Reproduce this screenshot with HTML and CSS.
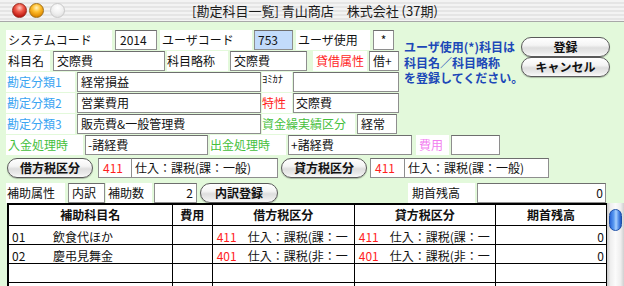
FILE: index.html
```html
<!DOCTYPE html>
<html lang="ja">
<head>
  <meta charset="UTF-8">
  <title>勘定科目一覧</title>
  <link rel="stylesheet" href="styles.css">
</head>
<body>

  <div class="window">

    <!-- Title Bar -->
    <div class="titlebar">
      <div class="lights">
        <span class="light red"></span>
        <span class="light yellow"></span>
        <span class="light off"></span>
      </div>
      <div class="title">[勘定科目一覧] 青山商店　株式会社 (37期)</div>
    </div>

    <div class="content">

      <!-- Top fields + actions -->
      <div class="top">
        <div class="fields">
          <div class="row">
            <div class="lbl sys-lbl">システムコード</div>
            <div class="box sys-box">2014</div>
            <div class="lbl user-lbl">ユーザコード</div>
            <div class="box user-box">753</div>
            <div class="lbl use-lbl">ユーザ使用</div>
            <div class="box use-box">*</div>
          </div>
          <div class="row">
            <div class="lbl name-lbl">科目名</div>
            <div class="box name-box">交際費</div>
            <div class="lbl short-lbl">科目略称</div>
            <div class="box short-box">交際費</div>
            <div class="lbl dc-lbl red">貸借属性</div>
            <div class="box dc-box">借+</div>
          </div>
          <div class="row">
            <div class="lbl cat-lbl blue">勘定分類1</div>
            <div class="box cat-box">経常損益</div>
            <div class="lbl kana-lbl">ﾖﾐｶﾅ</div>
            <div class="box side-box"></div>
          </div>
          <div class="row">
            <div class="lbl cat-lbl blue">勘定分類2</div>
            <div class="box cat-box">営業費用</div>
            <div class="lbl mid-lbl red">特性</div>
            <div class="box side-box">交際費</div>
          </div>
          <div class="row">
            <div class="lbl cat-lbl blue">勘定分類3</div>
            <div class="box cat-box">販売費&amp;一般管理費</div>
            <div class="lbl fund-lbl green">資金繰実績区分</div>
            <div class="box fund-box">経常</div>
          </div>
        </div>

        <div class="note">ユーザ使用(*)科目は<br>科目名／科目略称<br>を登録してください。</div>

        <div class="actions">
          <button class="aqua">登録</button>
          <button class="aqua">キャンセル</button>
        </div>
      </div>

      <div class="row">
        <div class="lbl in-lbl green">入金処理時</div>
        <div class="box in-box">-諸経費</div>
        <div class="lbl out-lbl green">出金処理時</div>
        <div class="box out-box">+諸経費</div>
        <div class="lbl cost-lbl pink">費用</div>
        <div class="box cost-box"></div>
      </div>

      <div class="row tax-row">
        <button class="aqua tax-btn">借方税区分</button>
        <div class="box code-box debit-code red">411</div>
        <div class="box tax-box">仕入：課税(課：一般)</div>
        <button class="aqua tax-btn credit-btn">貸方税区分</button>
        <div class="box code-box red">411</div>
        <div class="box tax-box credit-box">仕入：課税(課：一般)</div>
      </div>

      <div class="row sub-row">
        <div class="lbl sub-lbl">補助属性</div>
        <div class="box kind-box">内訳</div>
        <div class="lbl count-lbl">補助数</div>
        <div class="box count-box num">2</div>
        <button class="aqua detail-btn">内訳登録</button>
        <div class="lbl open-lbl">期首残高</div>
        <div class="box open-box num">0</div>
      </div>

      <!-- Sub account list -->
      <div class="list">
        <table class="grid">
          <colgroup>
            <col class="c-name"><col class="c-cost"><col class="c-tax"><col class="c-tax2"><col class="c-open">
          </colgroup>
          <thead>
            <tr><th>補助科目名</th><th>費用</th><th>借方税区分</th><th>貸方税区分</th><th>期首残高</th></tr>
          </thead>
          <tbody>
            <tr>
              <td><span class="code">01</span>飲食代ほか</td>
              <td></td>
              <td><span class="tcode">411</span>仕入：課税(課：一</td>
              <td><span class="tcode">411</span>仕入：課税(課：一</td>
              <td class="num">0</td>
            </tr>
            <tr>
              <td><span class="code">02</span>慶弔見舞金</td>
              <td></td>
              <td><span class="tcode">401</span>仕入：課税(非：一</td>
              <td><span class="tcode">401</span>仕入：課税(非：一</td>
              <td class="num">0</td>
            </tr>
            <tr><td></td><td></td><td></td><td></td><td></td></tr>
            <tr><td></td><td></td><td></td><td></td><td></td></tr>
          </tbody>
        </table>
        <div class="scrollbar"><div class="thumb"></div></div>
      </div>

    </div>
  </div>

</body>
</html>
```

FILE: styles.css
```css
/* Global */
body {
  margin: 0;
  font-family: "Noto Sans CJK JP", "Noto Sans", sans-serif;
  font-size: 12px;
  color: #111;
  background-color: #e3f9db;
}

.window {
  width: 624px;
  height: 286px;
  overflow: hidden;
  background-color: #e3f9db;
}

/* Title Bar */
.titlebar {
  height: 21px;
  display: flex;
  align-items: center;
  border-bottom: 1px solid #a8a8a8;
  background: repeating-linear-gradient(to bottom, #f3f3f3 0, #f3f3f3 2px, #e5e5e5 2px, #e5e5e5 4px);
}

.lights {
  display: flex;
  gap: 2px;
  padding-left: 12px;
  width: 56px;
}

.light {
  width: 15px;
  height: 15px;
  border-radius: 50%;
  box-sizing: border-box;
}

.light.red {
  background: radial-gradient(circle at 50% 30%, #ffd0c8 0, #f05a4a 35%, #c01a12 75%, #8a0a08 100%);
  border: 1px solid #9a2a20;
}

.light.yellow {
  background: radial-gradient(circle at 50% 30%, #fff2c0 0, #ffc030 35%, #e08a00 75%, #9a5a00 100%);
  border: 1px solid #a0701a;
}

.light.off {
  margin-left: 4px;
  background: radial-gradient(circle at 50% 30%, #ffffff 0, #f0f0f0 50%, #d8d8d8 100%);
  border: 1px solid #c8c8c8;
}

.title {
  margin-left: 124px;
  font-size: 13px;
  color: #1a1a1a;
  white-space: nowrap;
}

/* Content */
.content {
  padding-top: 8px;
}

.top {
  display: flex;
}

.fields {
  width: 400px;
  flex-shrink: 0;
}

.row {
  display: flex;
  align-items: flex-start;
  height: 21px;
}

.lbl {
  height: 20px;
  line-height: 20px;
  background-color: #fff;
  padding-left: 2px;
  box-sizing: border-box;
  white-space: nowrap;
  overflow: hidden;
  flex-shrink: 0;
}

.box {
  height: 20px;
  line-height: 18px;
  background-color: #fff;
  border: 1px solid #8e8e8e;
  border-top-color: #6e6e6e;
  padding-left: 3px;
  box-sizing: border-box;
  white-space: nowrap;
  overflow: hidden;
  flex-shrink: 0;
}

.num {
  text-align: right;
  padding-right: 2px;
}

.red { color: #ff1e1e; }
.blue { color: #3aa4f2; }
.green { color: #45c03c; }
.pink { color: #f27ef0; }

/* Row 1 */
.sys-lbl { margin-left: 6px; width: 106px; }
.sys-box { margin-left: 3px; width: 42px; padding-left: 4px; }
.user-lbl { margin-left: 3px; width: 92px; }
.user-box { margin-left: 2px; width: 39px; background-color: #c2dbfb; }
.use-lbl { margin-left: 3px; width: 74px; }
.use-box { margin-left: 3px; width: 21px; padding-left: 0; text-align: center; }

/* Row 2 */
.name-lbl { margin-left: 6px; width: 44px; }
.name-box { margin-left: 3px; width: 112px; }
.short-lbl { margin-left: 2px; width: 61px; padding-left: 0; }
.short-box { margin-left: 2px; width: 77px; }
.dc-lbl { margin-left: 6px; width: 54px; padding-left: 3px; }
.dc-box { margin-left: 2px; width: 30px; }

/* Rows 3-5 */
.cat-lbl { margin-left: 6px; width: 69px; padding-left: 1px; }
.cat-box { margin-left: 2px; width: 184px; }
.kana-lbl {
  margin-left: 1px;
  width: 30px;
  padding-left: 0;
  font-size: 10.5px;
  line-height: 14px;
}
.mid-lbl { margin-left: 1px; width: 30px; padding-left: 0; }
.side-box { margin-left: 1px; width: 106px; padding-left: 2px; }
.fund-lbl { margin-left: 1px; width: 93px; padding-left: 0; }
.fund-box { margin-left: 2px; width: 40px; }

/* Side note and actions */
.note {
  margin-left: 4px;
  width: 115px;
  padding-top: 9px;
  line-height: 15.5px;
  font-weight: bold;
  color: #1c48b8;
  white-space: nowrap;
}

.actions {
  margin-left: 2px;
  padding-top: 7px;
  display: flex;
  flex-direction: column;
}

.aqua {
  width: 89px;
  height: 20px;
  padding: 0;
  margin: 0;
  border: 1px solid #5a5a5a;
  border-radius: 10px;
  background: linear-gradient(to bottom, #ffffff 0%, #f4f4f4 40%, #dedede 55%, #eaeaea 80%, #fafafa 100%);
  box-shadow: 0 1px 1px rgba(0, 0, 0, 0.25);
  font-family: inherit;
  font-size: 12px;
  font-weight: bold;
  color: #111;
  line-height: 18px;
  text-align: center;
  flex-shrink: 0;
}

/* Row 6 */
.in-lbl { margin-left: 6px; width: 77px; }
.in-box { margin-left: 2px; width: 123px; padding-left: 2px; }
.out-lbl { margin-left: 2px; width: 76px; padding-left: 0; }
.out-box { margin-left: 2px; width: 124px; padding-left: 2px; }
.cost-lbl { margin-left: 4px; width: 33px; padding-left: 3px; }
.cost-box { margin-left: 2px; width: 49px; }

/* Row 7 */
.tax-row {
  height: 25px;
  padding-top: 2px;
  box-sizing: border-box;
}

.tax-btn { margin-left: 7px; width: 86px; }
.credit-btn { margin-left: 3px; }
.code-box { margin-left: 3px; width: 35px; padding-left: 4px; }
.debit-code { margin-left: 5px; width: 34px; }
.tax-box { width: 146px; border-left: none; padding-left: 3px; }
.credit-box { width: 144px; }

/* Row 8 */
.sub-row {
  height: 22px;
  padding-top: 2px;
  box-sizing: border-box;
}

.sub-lbl { margin-left: 6px; width: 59px; padding-left: 1px; }
.kind-box { margin-left: 3px; width: 37px; }
.count-lbl { margin-left: 1px; width: 46px; }
.count-box { margin-left: 2px; width: 43px; padding-right: 3px; }
.detail-btn { margin-left: 3px; width: 78px; height: 20px; }
.open-lbl { margin-left: 130px; width: 67px; padding-left: 4px; }
.open-box { margin-left: 2px; width: 129px; }

/* List */
.list {
  display: flex;
  margin-left: 7px;
  height: 84px;
}

.grid {
  width: 600px;
  table-layout: fixed;
  border-collapse: collapse;
  background-color: #fff;
  border-top: 2px solid #000;
  border-left: 2px solid #000;
}

.c-name { width: 164px; }
.c-cost { width: 40px; }
.c-tax { width: 142px; }
.c-tax2 { width: 141px; }
.c-open { width: 111px; }

.grid th {
  height: 20px;
  padding: 0;
  font-weight: bold;
  border: 1px solid #000;
  border-top: none;
  line-height: 20px;
}

.grid td {
  height: 14px;
  padding: 4px 0 0 3px;
  line-height: 14px;
  border: 1px solid #000;
  white-space: nowrap;
  overflow: hidden;
}

.grid td.num {
  text-align: right;
  padding-right: 2px;
}

.code {
  display: inline-block;
  width: 41px;
}

.tcode {
  display: inline-block;
  width: 31px;
  padding-left: 1px;
  color: #ff1e1e;
}

/* Scrollbar */
.scrollbar {
  width: 17px;
  flex-shrink: 0;
  background: linear-gradient(to right, #c8c8c8 0, #eeeeee 20%, #fbfbfb 50%, #eeeeee 80%, #d0d0d0 100%);
  padding-top: 6px;
  box-sizing: border-box;
}

.thumb {
  width: 13px;
  height: 22px;
  margin-left: 2px;
  border-radius: 7px;
  border: 1px solid #1d4fa8;
  box-sizing: border-box;
  background: linear-gradient(to right, #2a66d8 0, #5c9cf2 35%, #a8d0ff 55%, #4c88e6 80%, #2358c0 100%);
}
```
